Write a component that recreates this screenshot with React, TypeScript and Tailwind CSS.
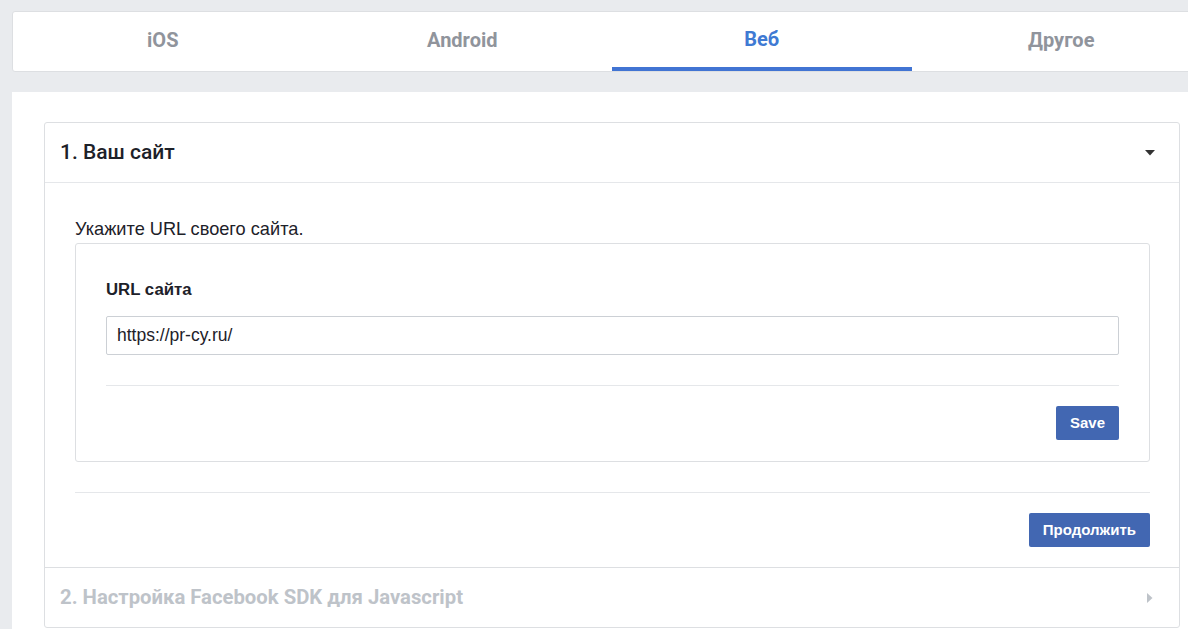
import React from 'react';

const tabs = ['iOS', 'Android', 'Веб', 'Другое'];

export default function App() {
  return (
    <div className="w-[1188px] h-[629px] overflow-hidden bg-[#e9ebee] pt-[11px]">
      <div className="w-[1200px] ml-[12px]">
        {/* Platform tabs */}
        <div className="flex h-[61px] bg-white border border-[#dddfe2] rounded-[3px] font-['Roboto',sans-serif]">
          {tabs.map((t) => (
            <div
              key={t}
              className={
                t === 'Веб'
                  ? 'flex-1 flex items-center justify-center text-[20px] font-bold text-[#3f7ad3] border-b-[4px] border-[#4174d3] pb-[2px]'
                  : 'flex-1 flex items-center justify-center text-[20px] font-bold text-[#90949c] pb-[4px]'
              }
            >
              {t}
            </div>
          ))}
        </div>

        {/* Main panel */}
        <div className="mt-[20px] bg-white pt-[30px] px-[32px] pb-[40px]">
          <div className="border border-[#dddfe2] rounded-[3px]">
            {/* Step 1 header */}
            <div className="h-[60px] flex items-center justify-between pl-[15px] pr-[24px] border-b border-[#e5e7ea]">
              <span className="font-['Roboto',sans-serif] text-[21px] font-medium text-[#1d2129]">1. Ваш сайт</span>
              <svg width="10" height="6" viewBox="0 0 10 6">
                <path d="M0 0h10L5 5.5z" fill="#333" />
              </svg>
            </div>

            {/* Step 1 body */}
            <div className="pl-[30px] pr-[29px] pt-[35px] font-['Liberation_Sans',Arial,sans-serif]">
              <p className="text-[18.2px] leading-[22px] text-[#1d2129] mb-[3px]">Укажите URL своего сайта.</p>
              <div className="border border-[#dddfe2] rounded-[3px] px-[30px] pt-[36px] pb-[21px]">
                <label className="block text-[16.8px] font-bold text-[#1d2129] leading-[20px] mb-[16px]">URL сайта</label>
                <div className="h-[39px] border border-[#ccd0d5] rounded-[2px] flex items-center px-[10px] text-[17.5px] text-[#1d2129]">
                  https://pr-cy.ru/
                </div>
                <div className="mt-[30px] border-t border-[#e5e7ea] pt-[20px] flex justify-end">
                  <button className="h-[34px] px-[14px] bg-[#4267b2] rounded-[2px] text-white text-[15px] font-bold">
                    Save
                  </button>
                </div>
              </div>
              <div className="mt-[30px] border-t border-[#e5e7ea] pt-[20px] pb-[20px] flex justify-end">
                <button className="h-[34px] px-[14px] bg-[#4267b2] rounded-[2px] text-white text-[15px] font-bold">
                  Продолжить
                </button>
              </div>
            </div>

            {/* Step 2 header */}
            <div className="h-[60px] flex items-center justify-between pl-[15px] pr-[26px] border-t border-[#dddfe2]">
              <span className="font-['Roboto',sans-serif] text-[20.3px] font-bold text-[#bec3c9]">
                2. Настройка Facebook SDK для Javascript
              </span>
              <svg width="6" height="10" viewBox="0 0 6 10">
                <path d="M0 0v10l5.5-5z" fill="#bec3c9" />
              </svg>
            </div>
          </div>
        </div>
      </div>
    </div>
  );
}
